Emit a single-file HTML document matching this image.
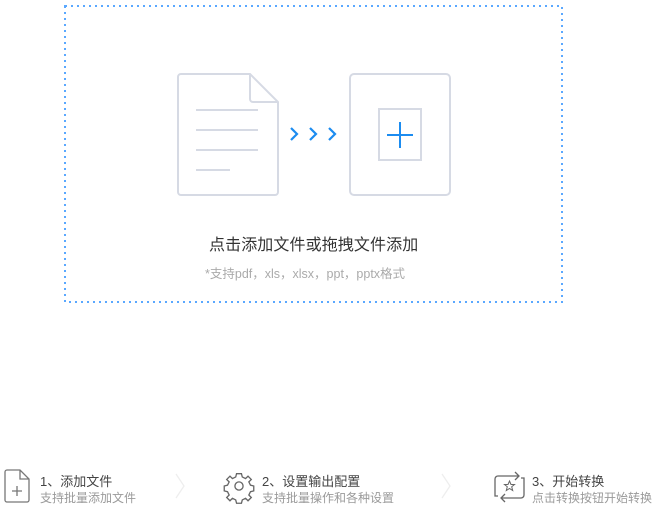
<!DOCTYPE html>
<html><head><meta charset="utf-8"><style>
body{margin:0;width:661px;height:516px;background:#fff;position:relative;overflow:hidden;font-family:"Liberation Sans","Noto Sans CJK SC",sans-serif}
.a{position:absolute;white-space:nowrap}
.t{font-size:13px;color:#444}
.s{font-size:12px;color:#9a9a9a}
</style></head><body>
<svg class="a" style="left:0;top:0" width="661" height="516">
<rect x="65" y="6" width="497" height="296" fill="none" stroke="#5aa8ff" stroke-width="2" stroke-dasharray="2 4"/>
<path d="M181 74 H250 L278 102 V192 a3 3 0 0 1 -3 3 H181 a3 3 0 0 1 -3 -3 V77 a3 3 0 0 1 3 -3Z" fill="none" stroke="#d6dae4" stroke-width="2"/>
<path d="M250 74 V99 a3 3 0 0 0 3 3 H278" fill="none" stroke="#d6dae4" stroke-width="2"/>
<path d="M196 110H258M196 130H258M196 150H258M196 170H230" stroke="#d6dae4" stroke-width="2"/>
<path d="M291 128l6 6-6 6M310 128l6 6-6 6M329 128l6 6-6 6" fill="none" stroke="#1c8cf0" stroke-width="2.2"/>
<rect x="350" y="74" width="100" height="121" rx="4" fill="none" stroke="#d6dae4" stroke-width="2"/>
<rect x="379" y="109" width="42" height="51" fill="none" stroke="#d6dae4" stroke-width="2"/>
<path d="M387 135H413M400 122V148" stroke="#1c8cf0" stroke-width="2"/>
<path d="M7 470H20L29 479V500a2 2 0 0 1-2 2H7a2 2 0 0 1-2-2V472a2 2 0 0 1 2-2Z M20 470V479H29 M12 491H22M17 486V496" fill="none" stroke="#777" stroke-width="1.3"/>
<path d="M176 474l8 12-8 12M442 474l8 12-8 12" fill="none" stroke="#eee" stroke-width="1.3"/>
<g transform="translate(239,486) scale(0.82)" fill="none" stroke="#666" stroke-width="1.6">
<path d="M-3-15h6l1 4 4 2 3-3 4 4-3 3 2 4 4 1v6l-4 1-2 4 3 3-4 4-3-3-4 2-1 4h-6l-1-4-4-2-3 3-4-4 3-3-2-4-4-1v-6l4-1 2-4-3-3 4-4 3 3 4-2z"/>
<circle r="5"/></g>
<g fill="none" stroke="#666" stroke-width="1.3">
<path d="M500 476H519M515 472l4 4-4 4M500 476h-2a3 3 0 0 0-3 3V496h3"/>
<path d="M520 498H501M505 494l-4 4 4 4M520 498h1a3 3 0 0 0 3-3V478h-3"/>
<path d="M509.5 481l1.5 3.5h3.5l-2.8 2.3 1 3.7-3.2-2-3.2 2 1-3.7-2.8-2.3h3.5z" stroke-width="1"/></g>
</svg>
<div class="a" style="left:209px;top:231px;font-size:16px;letter-spacing:0.1px;color:#333">点击添加文件或拖拽文件添加</div>
<div class="a" style="left:205px;top:263px;font-size:12.5px;color:#aaa">*支持pdf，xls，xlsx，ppt，pptx格式</div>
<div class="a t" style="left:40px;top:471px">1、添加文件</div>
<div class="a s" style="left:40px;top:489px">支持批量添加文件</div>
<div class="a t" style="left:262px;top:471px">2、设置输出配置</div>
<div class="a s" style="left:262px;top:489px">支持批量操作和各种设置</div>
<div class="a t" style="left:532px;top:471px">3、开始转换</div>
<div class="a s" style="left:532px;top:489px">点击转换按钮开始转换</div>
</body></html>
